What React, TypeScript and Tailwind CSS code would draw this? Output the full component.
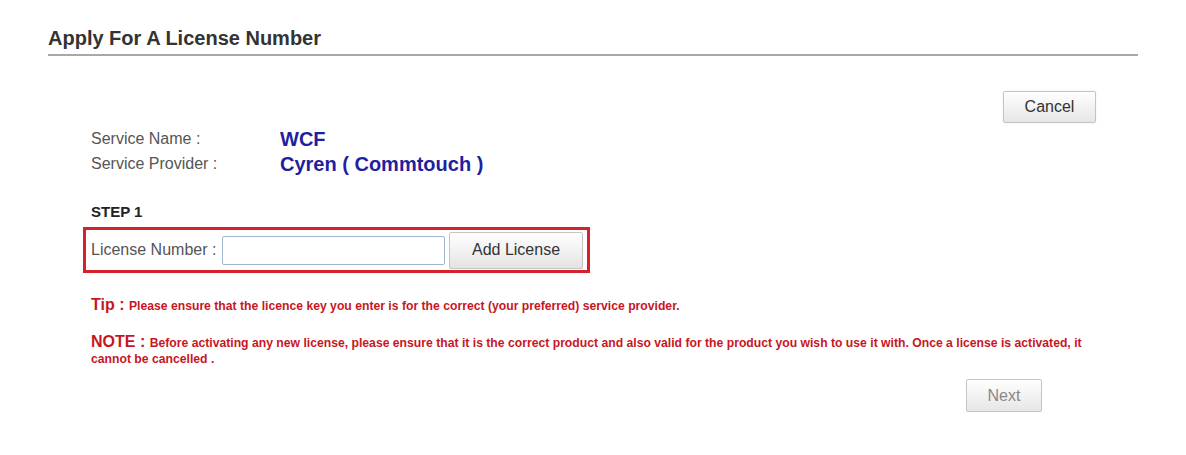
export default function App() {
  return (
    <div className="min-h-screen w-full bg-white px-12 pt-[26px] font-['Liberation_Sans',Arial,sans-serif]">
      <h1 className="border-b-2 border-[#a8a8a8] pb-[4px] text-[20px] font-bold leading-[24px] text-[#333]">
        Apply For A License Number
      </h1>

      <div className="pl-[43px] pr-[42px]">
        <div className="mt-[35px] flex justify-end">
          <button className="h-[32px] w-[93px] rounded-[2px] border border-[#c4c4c4] bg-gradient-to-b from-white to-[#e6e6e6] text-[16px] text-[#333] shadow-[0_0_2px_rgba(0,0,0,0.1)]">
            Cancel
          </button>
        </div>

        <div className="mt-[5px] grid grid-cols-[189px_1fr] items-center gap-y-[3px]">
          <div className="text-[16px] leading-[22px] text-[#555]">Service Name :</div>
          <div className="text-[20px] font-bold leading-[22px] text-[#1f1fa0]">WCF</div>
          <div className="text-[16px] leading-[22px] text-[#555]">Service Provider :</div>
          <div className="text-[20px] font-bold leading-[22px] text-[#1f1fa0]">Cyren ( Commtouch )</div>
        </div>

        <div className="mt-[28px] text-[15px] font-bold leading-[18px] text-[#222]">STEP 1</div>

        <div className="-ml-[8px] mt-[6px] flex h-[46px] w-[507px] items-center border-[3px] border-[#d6212b] pl-[5px]">
          <span className="w-[131px] text-[16px] text-[#555]">License Number :</span>
          <input
            className="h-[29px] w-[223px] rounded-[2px] border border-[#9fb6cc] bg-white outline-none"
            type="text"
          />
          <button className="ml-[4px] h-[37px] w-[134px] rounded-[2px] border border-[#c4c4c4] bg-gradient-to-b from-white to-[#e4e4e4] text-[16px] text-[#333]">
            Add License
          </button>
        </div>

        <p className="mt-[22px] leading-[20px] text-[#c8161f]">
          <span className="text-[16px] font-bold">Tip : </span>
          <span className="text-[12.2px] font-bold">
            Please ensure that the licence key you enter is for the correct (your preferred) service provider.
          </span>
        </p>

        <p className="mt-[18px] text-[12.2px] font-bold leading-[16px] text-[#c8161f]">
          <span className="inline-block h-[16px] text-[16px] leading-[16px]">NOTE :&nbsp;</span>
          Before activating any new license, please ensure that it is the correct product and also valid for the product you wish to use it with. Once a license is activated, it cannot be cancelled .
        </p>

        <div className="mt-[12px] flex justify-end pr-[54px]">
          <button className="h-[33px] w-[76px] rounded-[2px] border border-[#c4c4c4] bg-gradient-to-b from-white to-[#e6e6e6] text-[16px] text-[#888]">
            Next
          </button>
        </div>
      </div>
    </div>
  );
}
